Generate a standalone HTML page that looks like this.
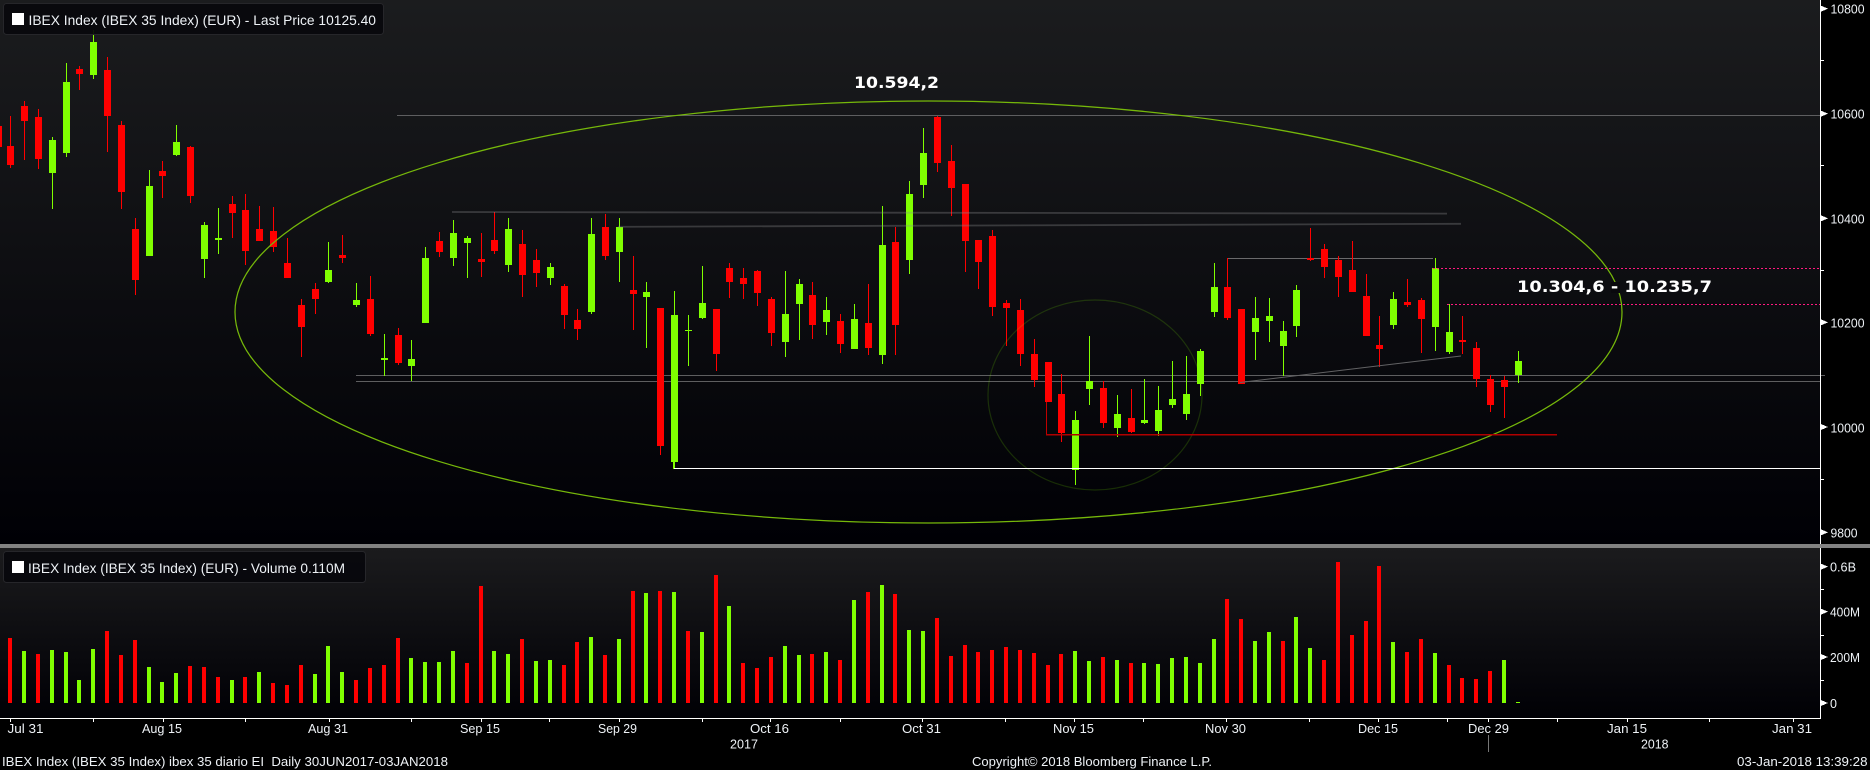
<!DOCTYPE html>
<html><head><meta charset="utf-8"><title>IBEX</title>
<style>
html,body{margin:0;padding:0;background:#000;width:1870px;height:770px;overflow:hidden}
svg{display:block}
text{font-family:"Liberation Sans",sans-serif;font-size:12.5px;fill:#eef2f6;white-space:pre}
.b{font-family:"DejaVu Sans",sans-serif;font-weight:bold;font-size:16px;fill:#fff}
.l{font-size:14px}
.f{font-size:13px}
</style></head><body>
<svg id="s" xmlns="http://www.w3.org/2000/svg" width="1870" height="770" viewBox="0 0 1870 770">
<defs>
<linearGradient id="g1" x1="0" y1="0" x2="0" y2="1"><stop offset="0" stop-color="#1b1c1e"/><stop offset="1" stop-color="#000005"/></linearGradient>
<linearGradient id="g2" x1="0" y1="0" x2="0" y2="1"><stop offset="0" stop-color="#1b1b1d"/><stop offset="1" stop-color="#000005"/></linearGradient>
</defs>
<rect width="1870" height="770" fill="#000"/>
<rect width="1821" height="544" fill="url(#g1)"/>
<rect y="548" width="1821" height="170" fill="url(#g2)"/>
<g id="under" shape-rendering="crispEdges">
<rect x="397" y="115" width="1424" height="1" fill="#5e5e60"/>
<rect x="356" y="375" width="1469" height="1" fill="#5e5e60"/>
<rect x="356" y="381" width="1465" height="1" fill="#5e5e60"/>
<rect x="1227" y="258" width="206" height="1" fill="#6a6a6c"/>
</g>
<g id="c" shape-rendering="crispEdges"></g>
<g fill="none">
<line x1="452" y1="212" x2="1447" y2="213.6" stroke="#8a8a8c" stroke-opacity=".34" stroke-width="1.8"/>
<line x1="618" y1="226.8" x2="1461" y2="223.8" stroke="#8a8a8c" stroke-opacity=".34" stroke-width="1.8"/>
<line x1="1240" y1="382.5" x2="1461" y2="356" stroke="#626264" stroke-width="1"/>
<ellipse cx="928.5" cy="312" rx="693.5" ry="211" stroke="#76b80a" stroke-width="1.25"/>
<ellipse cx="1095" cy="395" rx="107" ry="95" stroke="#80ff00" stroke-opacity=".17" stroke-width="1.2"/>
</g>
<g shape-rendering="crispEdges">
<rect x="673" y="468" width="1148" height="1" fill="#fff"/>
<rect x="673" y="462" width="1" height="7" fill="#80ff00"/>
<rect x="1046" y="402" width="1" height="33" fill="#c00000"/>
<rect x="1046" y="434" width="511" height="1.5" fill="#b00000"/>
<line x1="1433" y1="268.5" x2="1821" y2="268.5" stroke="#ff1a80" stroke-dasharray="2 2"/>
<line x1="1447" y1="304.5" x2="1821" y2="304.5" stroke="#ff1a80" stroke-dasharray="2 2"/>
<rect x="1820" y="0" width="1" height="718" fill="#fff"/>
<rect x="0" y="718" width="1821" height="1" fill="#fff"/>
<rect x="0" y="544" width="1870" height="4" fill="#828282"/>
<rect x="1488" y="735" width="1" height="17" fill="#777"/>
<rect x="1611" y="282" width="9" height="11" fill="#09090d"/>
</g>
<g id="t" shape-rendering="crispEdges" fill="#fff"></g>
<rect x="3.5" y="3.5" width="380" height="31" rx="3" fill="#08080c" fill-opacity=".92" stroke="#26262a"/>
<rect x="12" y="13" width="12" height="12" fill="#fff"/>
<text class="l" x="28.5" y="25" textLength="347.5" lengthAdjust="spacingAndGlyphs">IBEX Index (IBEX 35 Index) (EUR) - Last Price 10125.40</text>
<rect x="3.5" y="551.5" width="362" height="31" rx="3" fill="#08080c" fill-opacity=".92" stroke="#26262a"/>
<rect x="12" y="561" width="12" height="12" fill="#fff"/>
<text class="l" x="28" y="573" textLength="317" lengthAdjust="spacingAndGlyphs">IBEX Index (IBEX 35 Index) (EUR) - Volume 0.110M</text>
<text class="b" x="854" y="88" textLength="85" lengthAdjust="spacingAndGlyphs">10.594,2</text>
<text class="b" x="1517" y="292" textLength="195" lengthAdjust="spacingAndGlyphs">10.304,6 - 10.235,7</text>
<text x="1830.5" y="13.5" textLength="34" lengthAdjust="spacingAndGlyphs">10800</text>
<text x="1830.5" y="118.5" textLength="34" lengthAdjust="spacingAndGlyphs">10600</text>
<text x="1830.5" y="223.5" textLength="34" lengthAdjust="spacingAndGlyphs">10400</text>
<text x="1830.5" y="327.5" textLength="34" lengthAdjust="spacingAndGlyphs">10200</text>
<text x="1830.5" y="432.5" textLength="34" lengthAdjust="spacingAndGlyphs">10000</text>
<text x="1830.5" y="537.5" textLength="27" lengthAdjust="spacingAndGlyphs">9800</text>
<text x="1830" y="571.5" textLength="26" lengthAdjust="spacingAndGlyphs">0.6B</text>
<text x="1830" y="616.5" textLength="30" lengthAdjust="spacingAndGlyphs">400M</text>
<text x="1830" y="662" textLength="30" lengthAdjust="spacingAndGlyphs">200M</text>
<text x="1830" y="708">0</text>
<text x="7.5" y="733" textLength="36" lengthAdjust="spacingAndGlyphs">Jul 31</text>
<text x="142" y="733" textLength="40" lengthAdjust="spacingAndGlyphs">Aug 15</text>
<text x="308" y="733" textLength="40" lengthAdjust="spacingAndGlyphs">Aug 31</text>
<text x="460" y="733" textLength="40" lengthAdjust="spacingAndGlyphs">Sep 15</text>
<text x="598" y="733" textLength="39" lengthAdjust="spacingAndGlyphs">Sep 29</text>
<text x="750" y="733" textLength="39" lengthAdjust="spacingAndGlyphs">Oct 16</text>
<text x="902" y="733" textLength="39" lengthAdjust="spacingAndGlyphs">Oct 31</text>
<text x="1053" y="733" textLength="41" lengthAdjust="spacingAndGlyphs">Nov 15</text>
<text x="1205" y="733" textLength="41" lengthAdjust="spacingAndGlyphs">Nov 30</text>
<text x="1358" y="733" textLength="40" lengthAdjust="spacingAndGlyphs">Dec 15</text>
<text x="1468" y="733" textLength="41" lengthAdjust="spacingAndGlyphs">Dec 29</text>
<text x="1607" y="733" textLength="40" lengthAdjust="spacingAndGlyphs">Jan 15</text>
<text x="1772" y="733" textLength="40" lengthAdjust="spacingAndGlyphs">Jan 31</text>
<text x="730" y="748.5" textLength="28" lengthAdjust="spacingAndGlyphs">2017</text>
<text x="1641" y="748.5" textLength="27.5" lengthAdjust="spacingAndGlyphs">2018</text>
<text class="f" x="2" y="766" textLength="446" lengthAdjust="spacingAndGlyphs">IBEX Index (IBEX 35 Index) ibex 35 diario EI  Daily 30JUN2017-03JAN2018</text>
<text class="f" x="972" y="766" textLength="240" lengthAdjust="spacingAndGlyphs">Copyright© 2018 Bloomberg Finance L.P.</text>
<text class="f" x="1737" y="766" textLength="130.5" lengthAdjust="spacingAndGlyphs">03-Jan-2018 13:39:28</text>
</svg>
<script>
var C="r116,126,147,168 r116,146,165,168 r101,106,121,160 r109,117,159,169 g137,140,173,209 g63,82,153,157 r66,69,74,90 g30,42,75,79 r57,70,116,152 r121,125,192,209 r218,229,280,295 g170,186,256,256 r161,171,176,198 g125,142,155,156 r146,147,196,203 g222,225,259,278 g208,238,240,254 r196,204,213,238 r194,210,251,265 r206,229,241,241 r207,231,247,252 r238,263,278,278 r299,305,327,357 r283,289,299,314 g242,270,282,283 r235,255,258,263 g283,300,305,307 r276,299,334,336 g334,358,360,376 r328,335,363,365 g340,359,366,381 g247,258,323,323 r232,241,252,257 g220,233,258,266 g236,238,243,278 r233,259,262,277 r212,240,251,254 g218,229,265,272 r230,244,275,297 r249,260,273,287 g263,267,278,285 r284,286,315,329 r309,320,329,340 g218,234,312,314 r214,227,256,260 g218,227,252,282 r256,290,294,330 g282,292,297,348 r308,308,446,455 g291,315,462,468 g315,330,331,366 g266,303,318,319 r309,309,354,371 r263,268,282,298 r268,278,284,299 r270,271,293,306 r297,299,333,346 g271,314,342,357 g279,284,304,340 r282,295,325,339 g297,310,322,335 r314,321,344,353 g304,319,349,349 r284,323,348,355 g206,245,355,364 r227,242,325,355 g181,194,260,274 g128,153,185,198 r116,117,163,172 r145,161,188,216 r184,184,241,272 r240,240,262,289 r230,236,307,316 r300,303,308,346 r299,310,354,366 r339,354,380,387 r362,362,402,402 r374,394,433,442 g411,420,470,485 g336,381,389,405 r381,388,423,428 g395,414,428,437 r389,418,432,433 g379,420,423,424 g386,410,431,436 g361,399,405,408 g356,394,414,420 g349,351,384,396 g263,287,312,317 r258,287,318,320 r309,309,384,384 g297,318,332,360 g298,316,321,342 g321,331,346,376 g285,290,326,337 r228,258,260,261 r244,249,267,278 r256,260,277,297 r241,270,292,292 r274,296,336,336 r316,345,349,367 g292,299,325,329 r279,302,305,307 r298,300,319,353 g258,268,327,351 g304,332,352,354 r316,340,342,354 r342,348,379,387 r375,379,405,412 r376,380,387,418 g351,361,375,383".split(" ");
var V="r294 g333 r342 g330 g336 g420 g327 r273 r345 r300 g381 g426 g399 r378 r381 r411 g420 r411 g396 r429 r435 r375 g402 g318 g396 r420 r384 r375 r294 g354 g366 g366 g333 r369 r138 g333 g342 r297 g363 g360 r375 r306 g291 r345 g297 r153 g159 r153 g156 r273 g276 r105 g198 r369 r384 r351 g318 g345 r342 g336 r360 g180 r156 g135 r162 g270 g273 r234 r348 r315 r336 r330 r321 r330 r339 r375 r342 g333 g363 r351 g360 r369 g369 g372 g354 g351 g369 g297 r177 r237 g303 g276 r303 g231 g324 r360 r66 r285 r243 r78 g306 r336 r297 g339 r375 r414 r417 r393 g360 g486".split(" ");
var col={r:"#ff0000",g:"#80ff00"},h="",X=function(i){return 10.3+13.83*i};
function R(x,y,w,ht,f){return '<rect x="'+x+'" y="'+y+'" width="'+w+'" height="'+ht+'" fill="'+f+'"/>'}
C.forEach(function(s,k){var i=k-1,f=col[s[0]],a=s.slice(1).split(",").map(Number),cx=i<0?-2:Math.round(X(i));
h+=R(cx,a[0],1,a[3]-a[0],f)+R(cx-3,a[1],7,Math.max(a[2]-a[1],1),f)});
V.forEach(function(s,i){var f=col[s[0]],y=Math.round(540+Number(s.slice(1))/3),x=Math.round(X(i))-2;
h+=R(x,y,4,Math.max(703-y,1),f)});
document.getElementById("c").innerHTML=h;
var t="";
[8.7,113.7,218.3,322.3,427,532.3,566.7,611.7,657,703].forEach(function(y){t+='<polygon points="1821,'+(y-3)+' 1828,'+y+' 1821,'+(y+3)+'"/>'});
[60,165,270,479,589,634.5,680].forEach(function(y){t+=R(1821,Math.round(y),3,1,"#fff")});
[10,93,163,245,329,411,481,549,619,702,770,840,922,1005,1074,1143,1226,1309,1378,1447,1488,1557,1627,1709,1793].forEach(function(x){t+=R(x,719,1,3,"#fff")});
document.getElementById("t").innerHTML=t;
</script>
</body></html>
